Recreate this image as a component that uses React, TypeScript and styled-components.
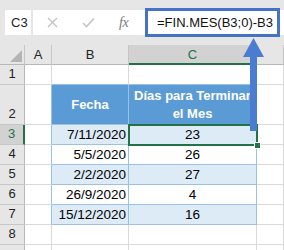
import styled, { createGlobalStyle } from "styled-components";
import React from "react";

const GlobalStyle = createGlobalStyle`
  body {
    margin: 0;
    background: #ffffff;
    font-family: "Liberation Sans", Arial, sans-serif;
  }
`;

const GREEN = "#217346";
const GRID = "#d9d9d9";
const TABLE_LINE = "#9bc2e6";

type Row = { fecha: string; dias: string };

const rows: Row[] = [
  { fecha: "7/11/2020", dias: "23" },
  { fecha: "5/5/2020", dias: "26" },
  { fecha: "2/2/2020", dias: "27" },
  { fecha: "26/9/2020", dias: "4" },
  { fecha: "15/12/2020", dias: "16" },
];

export default function App() {
  return (
    <>
      <GlobalStyle />
      <SPage>
        <SFormulaRow>
          <SNameBox>C3</SNameBox>
          <SFormulaBar>
            <SBarIcons>
              <SBarIcon>
                <svg width="11" height="11" viewBox="0 0 11 11">
                  <path d="M1 1 L10 10 M10 1 L1 10" stroke="#c4c4c4" strokeWidth="1.4" fill="none" />
                </svg>
              </SBarIcon>
              <SBarIcon>
                <svg width="13" height="11" viewBox="0 0 13 11">
                  <path d="M1 6 L4.5 9.5 L12 1.5" stroke="#c4c4c4" strokeWidth="1.6" fill="none" />
                </svg>
              </SBarIcon>
              <SFx>fx</SFx>
            </SBarIcons>
            <SFormulaInput>=FIN.MES(B3;0)-B3</SFormulaInput>
          </SFormulaBar>
        </SFormulaRow>

        <SSheet>
          {/* column headers */}
          <SCorner>
            <svg width="12" height="12" viewBox="0 0 12 12">
              <polygon points="12,0 12,12 0,12" fill="#b4b4b4" />
            </svg>
          </SCorner>
          <SColHead>A</SColHead>
          <SColHead>B</SColHead>
          <SColHead $active>C</SColHead>
          <SColHead />

          {/* row 1 */}
          <SRowHead>1</SRowHead>
          <SCell />
          <SCell $bottom={TABLE_LINE} />
          <SCell $bottom={TABLE_LINE} />
          <SCell />

          {/* row 2: table header */}
          <SRowHead>2</SRowHead>
          <SCell $right={TABLE_LINE} />
          <SHeadCell>Fecha</SHeadCell>
          <SHeadCell>Días para Terminar el Mes</SHeadCell>
          <SCell />

          {rows.map((r, i) => {
            const fill = i % 2 === 0 ? "#ddebf7" : "#ffffff";
            const selected = i === 0;
            return (
              <React.Fragment key={r.fecha}>
                <SRowHead $active={selected}>{i + 3}</SRowHead>
                <SCell $right={TABLE_LINE} />
                <SCell $bg={fill} $right={TABLE_LINE} $bottom={TABLE_LINE} $align="flex-end">
                  {r.fecha}
                </SCell>
                <SCell $bg={fill} $right={TABLE_LINE} $bottom={TABLE_LINE} $align="center">
                  {r.dias}
                  {selected && (
                    <SSelection>
                      <SFillHandle />
                    </SSelection>
                  )}
                </SCell>
                <SCell />
              </React.Fragment>
            );
          })}

          <SRowHead>8</SRowHead>
          <SCell />
          <SCell />
          <SCell />
          <SCell />

          {/* row 9 only peeks in at the bottom edge */}
          <SRowHead />
          <SCell />
          <SCell />
          <SCell />
          <SCell />
        </SSheet>

        <SArrow width="21" height="93" viewBox="0 0 21 93">
          <polygon points="10.5,0 21,19 0,19" fill="#4a7dd2" />
          <rect x="7" y="18" width="7" height="75" fill="#4a7dd2" />
        </SArrow>
      </SPage>
    </>
  );
}

const SPage = styled.div`
  position: relative;
  width: 284px;
  height: 250px;
  overflow: hidden;
  background: #e6e6e6;
`;

const SFormulaRow = styled.div`
  display: flex;
  align-items: flex-start;
  gap: 2px;
  height: 45px;
  padding: 10px 0 0 5px;
  box-sizing: border-box;
`;

const SNameBox = styled.div`
  width: 26px;
  height: 25px;
  box-sizing: border-box;
  background: #fff;
  display: flex;
  align-items: center;
  padding-left: 6px;
  font-size: 13px;
  color: #222;
`;

const SFormulaBar = styled.div`
  flex: 1;
  height: 25px;
  background: #fff;
  display: flex;
  align-items: center;
`;

const SBarIcons = styled.div`
  width: 112px;
  display: flex;
  align-items: center;
  gap: 24px;
  padding-left: 14px;
  box-sizing: border-box;
`;

const SBarIcon = styled.span`
  display: flex;
  align-items: center;
`;

const SFx = styled.span`
  font-family: "Liberation Serif", "Times New Roman", serif;
  font-style: italic;
  font-size: 14px;
  color: #7a7a7a;
  letter-spacing: -0.5px;
`;

const SFormulaInput = styled.div`
  width: 135px;
  height: 29px;
  box-sizing: border-box;
  border: 3px solid #4472c4;
  display: flex;
  align-items: center;
  padding-left: 9px;
  font-size: 13px;
  color: #111;
  white-space: nowrap;
  background: #fff;
`;

const SSheet = styled.div`
  display: grid;
  grid-template-columns: 25px 27px 77px 128px 1fr;
  grid-template-rows: 20px 20px 40px repeat(7, 20px);
  background: #fff;
`;

const SCorner = styled.div`
  background: #e6e6e6;
  border-right: 1px solid #c6c6c6;
  border-bottom: 1px solid #b8b8b8;
  display: flex;
  align-items: flex-end;
  justify-content: flex-end;
  padding: 0 2px 2px 0;
`;

const SColHead = styled.div<{ $active?: boolean }>`
  background: ${(p) => (p.$active ? "#d2d2d2" : "#e6e6e6")};
  border-right: 1px solid #c6c6c6;
  border-bottom: ${(p) => (p.$active ? `2px solid ${GREEN}` : "1px solid #b8b8b8")};
  display: flex;
  align-items: center;
  justify-content: center;
  font-size: 13px;
  color: ${(p) => (p.$active ? GREEN : "#222")};
`;

const SRowHead = styled.div<{ $active?: boolean }>`
  background: ${(p) => (p.$active ? "#d2d2d2" : "#e6e6e6")};
  border-right: ${(p) => (p.$active ? `2px solid ${GREEN}` : "1px solid #b8b8b8")};
  border-bottom: 1px solid #c6c6c6;
  display: flex;
  align-items: flex-end;
  justify-content: center;
  padding-bottom: 3px;
  font-size: 13px;
  color: ${(p) => (p.$active ? GREEN : "#222")};
`;

const SCell = styled.div<{ $bg?: string; $right?: string; $bottom?: string; $align?: string }>`
  position: relative;
  background: ${(p) => p.$bg || "#fff"};
  border-right: 1px solid ${(p) => p.$right || GRID};
  border-bottom: 1px solid ${(p) => p.$bottom || GRID};
  display: flex;
  align-items: center;
  justify-content: ${(p) => p.$align || "flex-start"};
  padding: 0 2px;
  font-size: 13.5px;
  color: #000;
  white-space: nowrap;
`;

const SHeadCell = styled.div`
  background: #5b9bd5;
  border-right: 1px solid ${TABLE_LINE};
  border-bottom: 1px solid ${TABLE_LINE};
  display: flex;
  align-items: center;
  justify-content: center;
  text-align: center;
  padding: 0 2px;
  font-size: 13px;
  font-weight: bold;
  line-height: 18px;
  color: #fff;
`;

const SSelection = styled.div`
  position: absolute;
  left: -1px;
  top: -1px;
  right: -2px;
  bottom: -2px;
  border: 2px solid ${GREEN};
  z-index: 1;
`;

const SFillHandle = styled.div`
  position: absolute;
  right: -5px;
  bottom: -5px;
  width: 5px;
  height: 5px;
  background: ${GREEN};
  border: 1px solid #fff;
`;

const SArrow = styled.svg`
  position: absolute;
  left: 243px;
  top: 38px;
  z-index: 2;
`;
